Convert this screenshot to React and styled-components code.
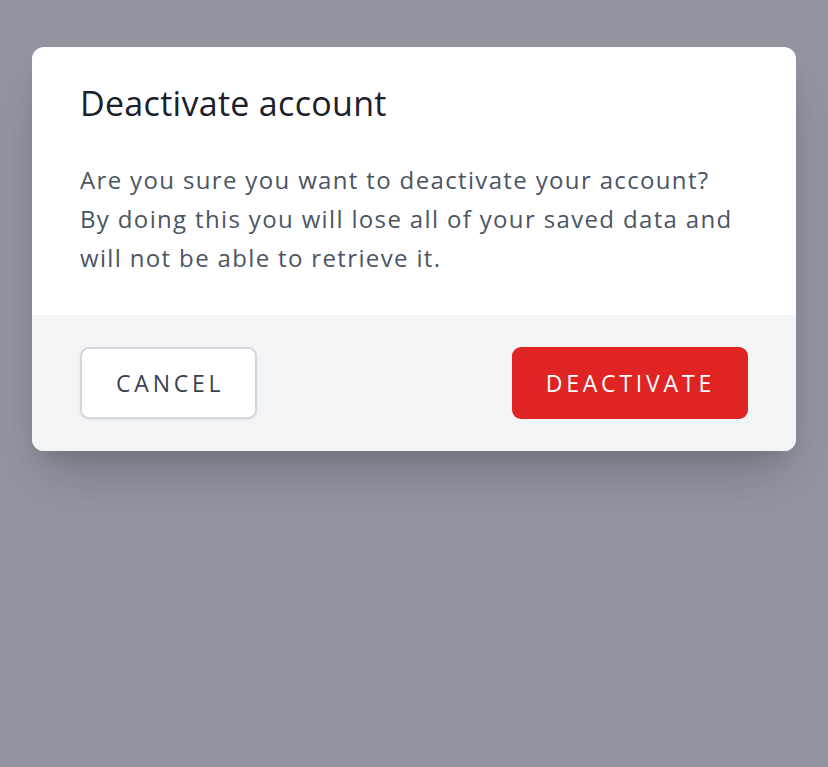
import React from "react";
import styled, { createGlobalStyle } from "styled-components";

const GlobalStyle = createGlobalStyle`
  html, body {
    margin: 0;
    padding: 0;
    background: #9196a1;
    font-family: "Open Sans", "Noto Sans", sans-serif;
  }
  * {
    box-sizing: border-box;
  }
`;

const Overlay = styled.div`
  width: 828px;
  height: 767px;
  background: #9196a1;
  padding: 47px 32px 0;
`;

const Modal = styled.div`
  width: 764px;
  background: #ffffff;
  border-radius: 12px;
  overflow: hidden;
  box-shadow: 0 30px 50px -12px rgb(0 0 0 / 22%), 0 12px 20px -8px rgb(0 0 0 / 10%);
`;

const Body = styled.div`
  padding: 32px 48px 38px;
`;

const Title = styled.h3`
  margin: 0;
  font-size: 34px;
  line-height: 48px;
  letter-spacing: 0.3px;
  font-weight: 400;
  color: #1a202c;
`;

const Text = styled.p`
  margin: 33px 0 0;
  font-size: 24px;
  line-height: 39px;
  letter-spacing: 1.35px;
  color: #4b5563;
`;

const Footer = styled.div`
  display: flex;
  justify-content: space-between;
  align-items: center;
  background: #f3f4f6;
  padding: 32px 48px;
`;

const Button = styled.button`
  height: 72px;
  padding: ${(p) => (p.$danger ? "0 33px 0 34px" : "0 31px 0 34px")};
  border-radius: 9px;
  font-family: inherit;
  font-size: 23px;
  letter-spacing: 3.8px;
  text-transform: uppercase;
  cursor: pointer;
  border: ${(p) => (p.$danger ? "none" : "2px solid #d5d7de")};
  background: ${(p) => (p.$danger ? "#e02424" : "#ffffff")};
  color: ${(p) => (p.$danger ? "#ffffff" : "#374151")};
  box-shadow: ${(p) => (p.$danger ? "none" : "0 1px 3px rgb(0 0 0 / 8%)")};
`;

export default function App() {
  return (
    <>
      <GlobalStyle />
      <Overlay>
        <Modal>
          <Body>
            <Title>Deactivate account</Title>
            <Text>
              Are you sure you want to deactivate your account?
              <br />
              By doing this you will lose all of your saved data and
              <br />
              will not be able to retrieve it.
            </Text>
          </Body>
          <Footer>
            <Button>Cancel</Button>
            <Button $danger>Deactivate</Button>
          </Footer>
        </Modal>
      </Overlay>
    </>
  );
}
